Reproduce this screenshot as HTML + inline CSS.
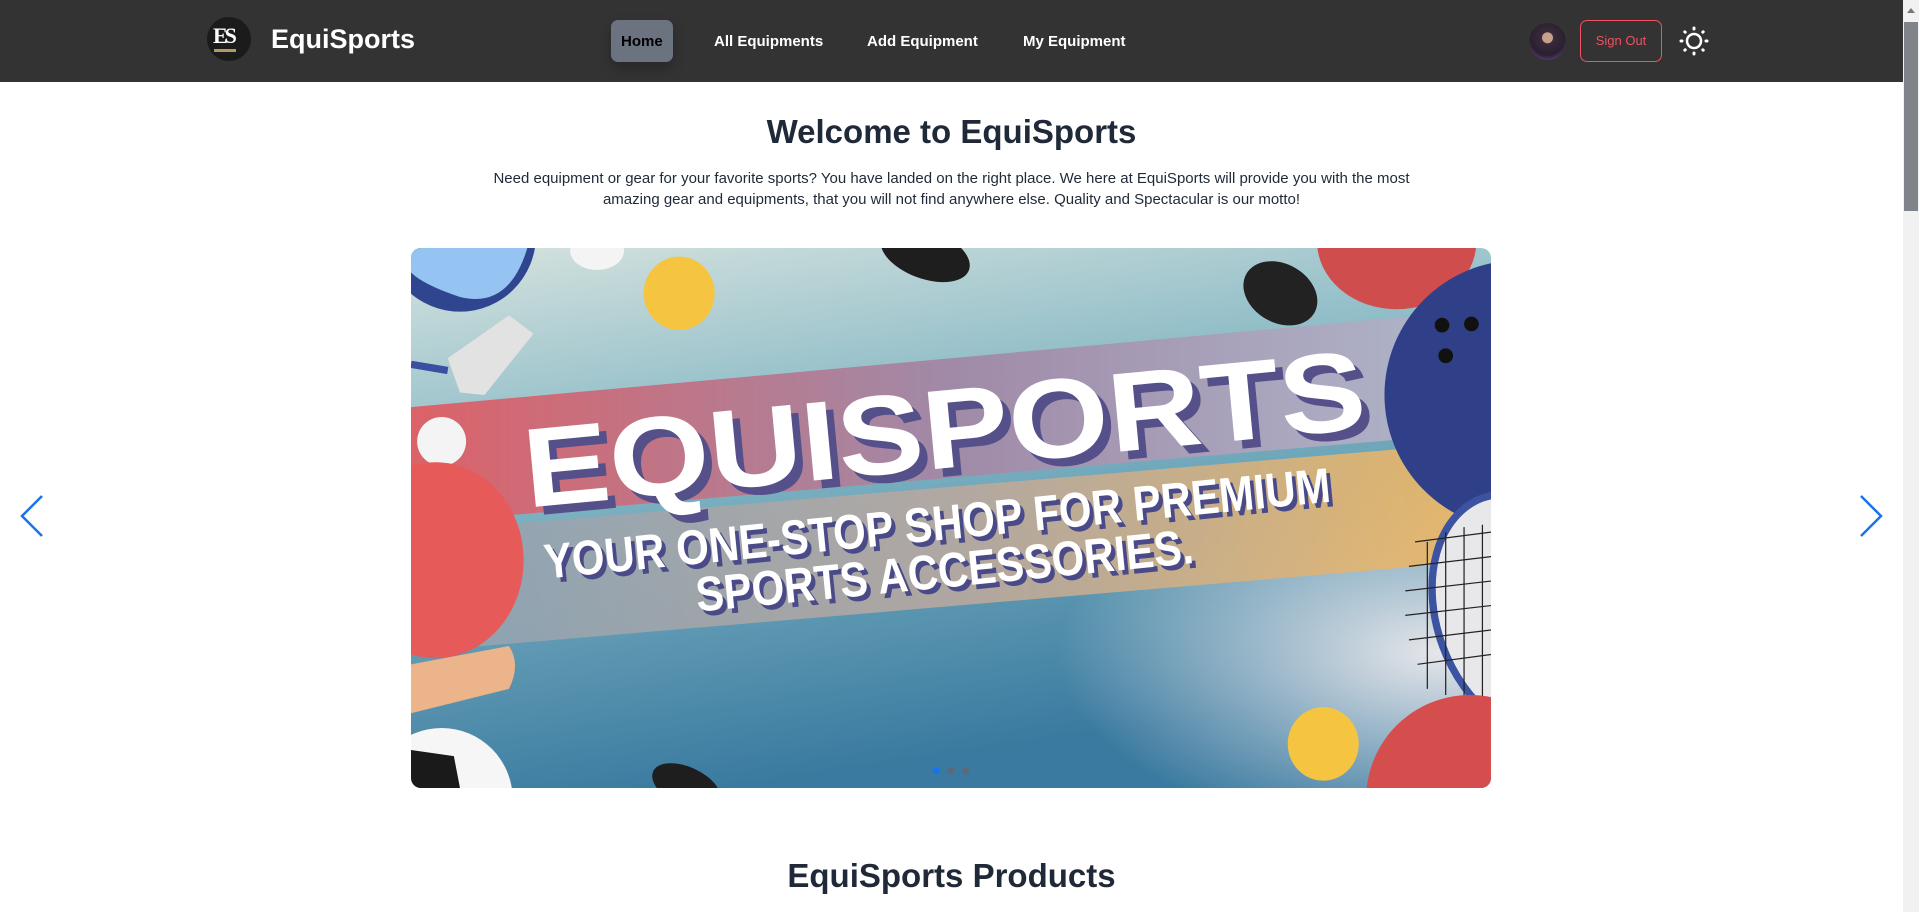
<!DOCTYPE html>
<html><head><meta charset="utf-8"><style>
*{margin:0;padding:0;box-sizing:border-box}
html,body{width:1919px;height:912px;overflow:hidden;background:#fff;font-family:"Liberation Sans",sans-serif}
.nav{position:absolute;left:0;top:0;width:1903px;height:82px;background:#333333}
.abs{position:absolute}
.link{position:absolute;top:33px;color:#fff;font-weight:bold;font-size:15px}
.sb{position:absolute;left:1903px;top:0;width:16px;height:912px;background:#f1f1f1}
</style></head><body>
<div class="nav">
  <div class="abs" style="left:207px;top:17px;width:44px;height:44px;border-radius:50%;background:#1b1b1b"></div>
  <div class="abs" style="left:213px;top:23px;color:#fff;font-family:'Liberation Serif',serif;font-weight:bold;font-size:22px;letter-spacing:-3px">ES</div>
  <div class="abs" style="left:214px;top:49px;width:22px;height:3px;background:#b09a60"></div>
  <div class="abs" style="left:271px;top:24px;color:#fff;font-weight:bold;font-size:27px">EquiSports</div>
  <div class="abs" style="left:611px;top:20px;width:62px;height:42px;border-radius:7px;background:#6b7280;box-shadow:0 6px 12px rgba(0,0,0,.25)"></div>
  <div class="link" style="left:621px;color:#000">Home</div>
  <div class="link" style="left:714px">All Equipments</div>
  <div class="link" style="left:867px">Add Equipment</div>
  <div class="link" style="left:1023px">My Equipment</div>
  <div class="abs" style="left:1529px;top:23px;width:37px;height:37px;border-radius:50%;background:radial-gradient(circle at 50% 40%,#c9a08a 0 18%,#3a2a3a 20%,#2a2030 60%,#5a3a7a 80%)"></div>
  <div class="abs" style="left:1580px;top:20px;width:82px;height:42px;border:1.5px solid #f05060;border-radius:7px;color:#f05060;font-size:13px;text-align:center;line-height:39px">Sign Out</div>
  <svg class="abs" style="left:1679px;top:26px" width="30" height="30" viewBox="0 0 30 30"><circle cx="15" cy="15" r="7" fill="none" stroke="#fff" stroke-width="2.5"/><g stroke="#fff" stroke-width="3" stroke-linecap="round"><path d="M15 2v1M15 27v1M2 15h1M27 15h1M5.8 5.8l.4.4M23.8 23.8l.4.4M5.8 24.2l.4-.4M23.8 6.2l.4-.4"/></g></svg>
</div>
<div class="sb"><div class="abs" style="left:1px;top:22px;width:14px;height:189px;background:#7f848b"></div><div class="abs" style="left:4px;top:8px;border:4px solid transparent;border-bottom:5px solid #777;border-top:0"></div></div>

<div class="abs" style="left:0;top:113px;width:1903px;text-align:center;color:#1f2937;font-weight:bold;font-size:33px">Welcome to EquiSports</div>
<div class="abs" style="left:0;top:168px;width:1903px;text-align:center;color:#1f2937;font-size:15px;line-height:21px">Need equipment or gear for your favorite sports? You have landed on the right place. We here at EquiSports will provide you with the most<br>amazing gear and equipments, that you will not find anywhere else. Quality and Spectacular is our motto!</div>

<div class="abs" style="left:411px;top:248px;width:1080px;height:540px;border-radius:10px;overflow:hidden">
<svg width="1080" height="540" viewBox="0 0 882 441" preserveAspectRatio="none">
<defs>
<linearGradient id="bg" x1="0" y1="0" x2="0.3" y2="1"><stop offset="0" stop-color="#d6e3df"/><stop offset="0.45" stop-color="#7fb4c2"/><stop offset="1" stop-color="#3a7aa0"/></linearGradient>
<radialGradient id="br" cx="0.95" cy="0.75" r="0.35"><stop offset="0" stop-color="#e6e6ea"/><stop offset="1" stop-color="#e6e6ea" stop-opacity="0"/></radialGradient>
<linearGradient id="pk" x1="0" x2="1"><stop offset="0" stop-color="#dc6268"/><stop offset="0.5" stop-color="#a08aa8"/><stop offset="1" stop-color="#b0b8cc"/></linearGradient>
<linearGradient id="or" x1="0" x2="1"><stop offset="0" stop-color="#8ea3b4"/><stop offset="0.5" stop-color="#b8a8a0"/><stop offset="1" stop-color="#f0b860"/></linearGradient>
</defs>
<rect width="882" height="441" fill="url(#bg)"/>
<rect width="882" height="441" fill="url(#br)"/>
<polygon points="0,130 882,50 882,150 0,225" fill="url(#pk)"/>
<polygon points="0,232 882,158 882,255 0,330" fill="url(#or)" opacity="0.9"/>
<circle cx="40" cy="-10" r="62" fill="#2f4590"/><path d="M0 0 L95 0 Q80 50 40 40 Q10 30 0 20Z" fill="#95c3f2"/>
<ellipse cx="152" cy="2" rx="22" ry="16" fill="#f4f4f4"/>
<ellipse cx="219" cy="37" rx="29" ry="30" fill="#f5c542"/>
<ellipse cx="420" cy="5" rx="38" ry="20" fill="#1e1e1e" transform="rotate(20 420 5)"/>
<ellipse cx="710" cy="37" rx="32" ry="24" fill="#222" transform="rotate(30 710 37)"/>
<ellipse cx="805" cy="-5" rx="65" ry="55" fill="#cf4d4d"/>
<circle cx="905" cy="120" r="110" fill="#2f3f88"/>
<circle cx="842" cy="63" r="6" fill="#111"/><circle cx="866" cy="62" r="6" fill="#111"/><circle cx="845" cy="88" r="6" fill="#111"/>
<ellipse cx="910" cy="300" rx="102" ry="72" fill="#e8e8ea" stroke="#3b53a0" stroke-width="6" transform="rotate(70 910 300)"/>
<g stroke="#222" stroke-width="1"><path d="M820 240 L882 232 M815 260 L882 252 M812 280 L882 272 M812 300 L882 292 M815 320 L882 312 M822 340 L882 332"/><path d="M830 240 V360 M845 232 V365 M860 228 V368 M875 226 V370"/></g>
<path d="M30 90 L80 55 L100 70 L60 120 L40 118Z" fill="#e2e2e2"/><path d="M0 95 L30 100" stroke="#3a4fa0" stroke-width="6"/>
<circle cx="25" cy="158" r="20" fill="#f4f4f4"/>
<ellipse cx="20" cy="255" rx="72" ry="80" fill="#e65a5a"/>
<path d="M0 340 L80 325 Q90 340 80 360 L0 380Z" fill="#ebb48a"/>
<circle cx="25" cy="450" r="58" fill="#f6f6f6"/><path d="M0 410 L35 415 L40 441 L0 441Z" fill="#1a1a1a"/>
<ellipse cx="225" cy="440" rx="30" ry="16" fill="#1e1e1e" transform="rotate(25 225 440)"/>
<ellipse cx="745" cy="405" rx="29" ry="30" fill="#f5c542"/>
<circle cx="865" cy="450" r="85" fill="#d44e4e"/>
<g transform="rotate(-5.4 95 212)" font-family="Liberation Sans,sans-serif" font-weight="bold" font-size="92">
<text x="95" y="212" fill="#55508a" textLength="690" lengthAdjust="spacingAndGlyphs" transform="translate(6 7)">EQUISPORTS</text>
<text x="95" y="212" fill="#fff" textLength="690" lengthAdjust="spacingAndGlyphs">EQUISPORTS</text>
</g>
<g transform="rotate(-5.6 110 270)" font-family="Liberation Sans,sans-serif" font-weight="bold" font-size="40">
<text x="110" y="270" fill="#4a4a88" textLength="645" lengthAdjust="spacingAndGlyphs" transform="translate(3 4)">YOUR ONE-STOP SHOP FOR PREMIUM</text>
<text x="110" y="270" fill="#fff" textLength="645" lengthAdjust="spacingAndGlyphs">YOUR ONE-STOP SHOP FOR PREMIUM</text>
</g>
<g transform="rotate(-5.6 234 297)" font-family="Liberation Sans,sans-serif" font-weight="bold" font-size="40">
<text x="234" y="297" fill="#4a4a88" textLength="408" lengthAdjust="spacingAndGlyphs" transform="translate(3 4)">SPORTS ACCESSORIES.</text>
<text x="234" y="297" fill="#fff" textLength="408" lengthAdjust="spacingAndGlyphs">SPORTS ACCESSORIES.</text>
</g>
<circle cx="429" cy="427" r="3" fill="#1a73e8"/><circle cx="441" cy="427" r="3" fill="#5a6a7a"/><circle cx="453" cy="427" r="3" fill="#5a6a7a"/>
</svg></div>

<svg class="abs" style="left:18px;top:494px" width="28" height="44" viewBox="0 0 28 44"><path d="M24 2 L4 22 L24 42" fill="none" stroke="#1a73e8" stroke-width="2.5"/></svg>
<svg class="abs" style="left:1857px;top:494px" width="28" height="44" viewBox="0 0 28 44"><path d="M4 2 L24 22 L4 42" fill="none" stroke="#1a73e8" stroke-width="2.5"/></svg>

<div class="abs" style="left:0;top:857px;width:1903px;text-align:center;color:#1f2937;font-weight:bold;font-size:33px">EquiSports Products</div>
</body></html>
